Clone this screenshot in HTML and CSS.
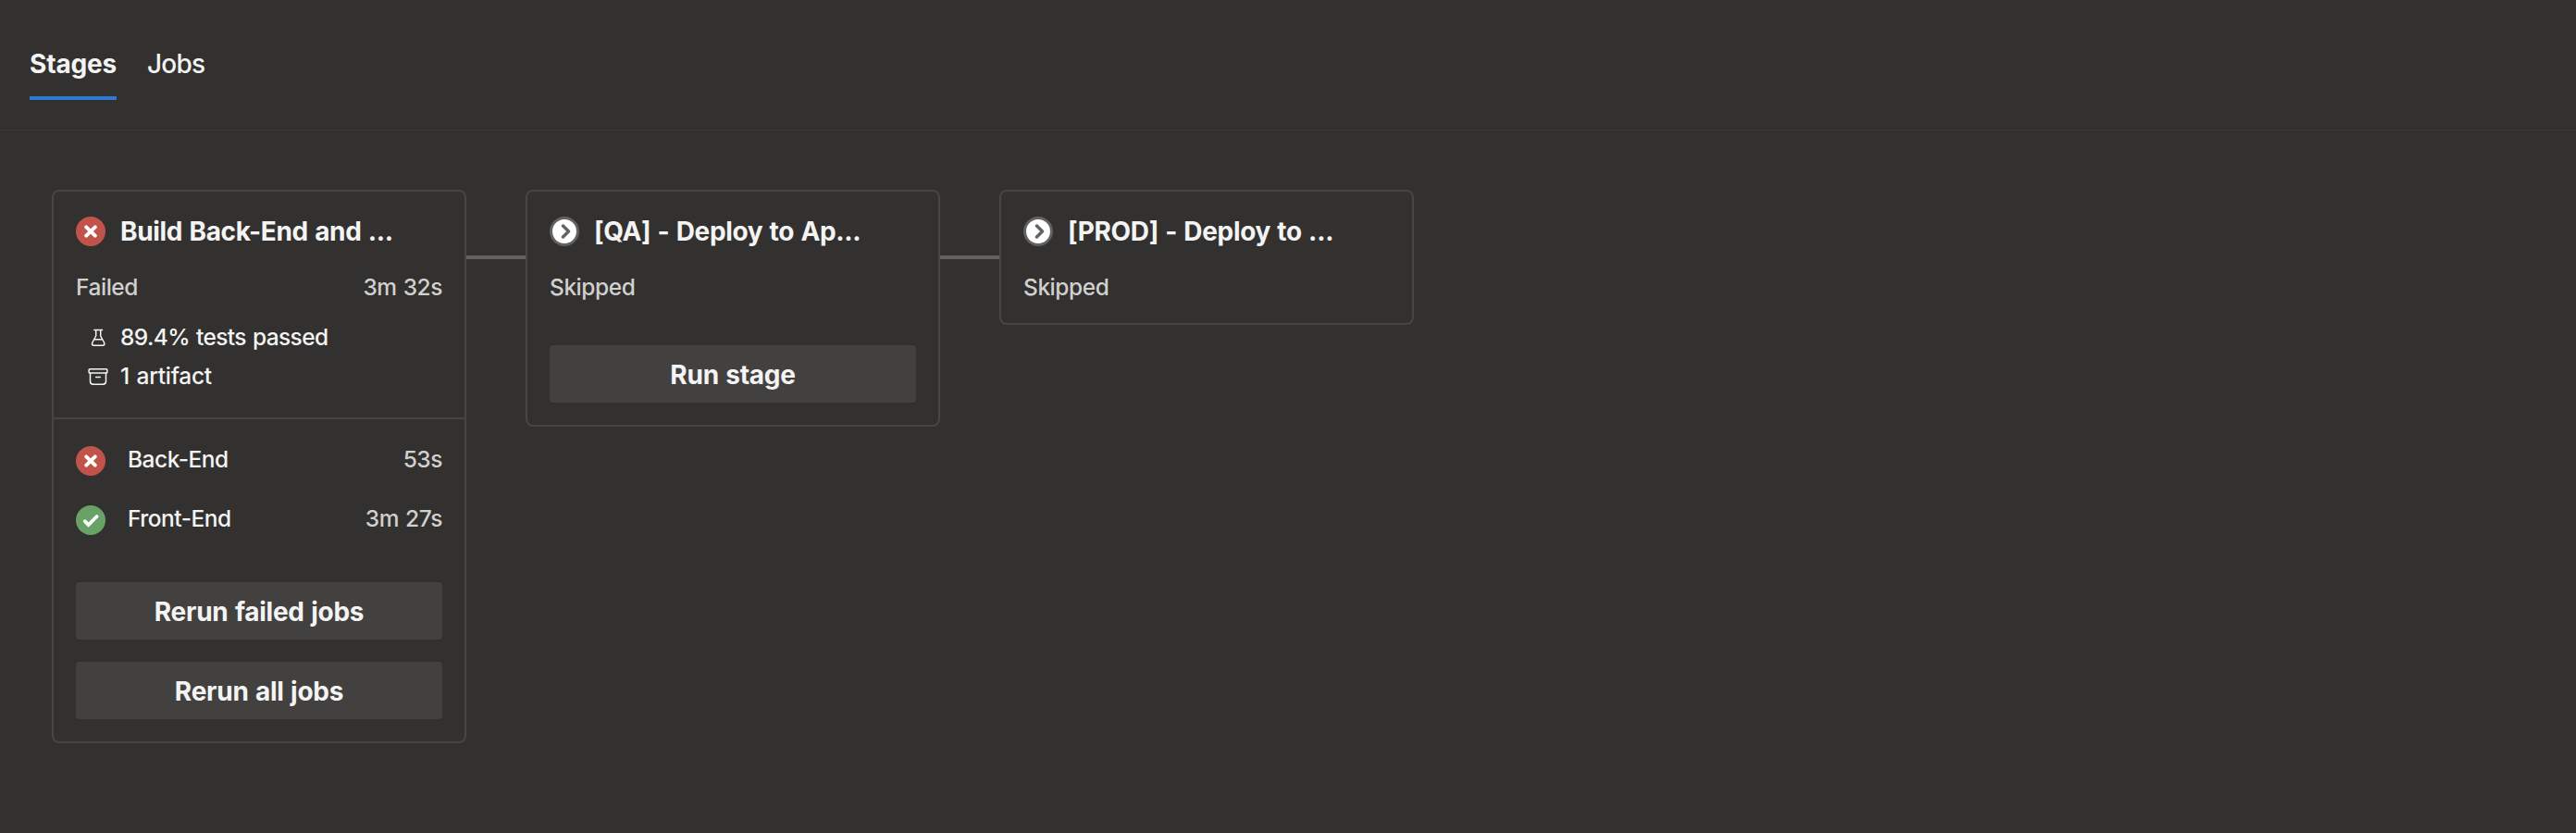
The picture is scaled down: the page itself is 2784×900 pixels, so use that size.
FILE: index.html
```
<!DOCTYPE html>
<html lang="en">
<head>
<meta charset="utf-8">
<title>Pipeline run</title>
<link rel="stylesheet" href="styles.css">
</head>
<body>
<svg class="sprite" aria-hidden="true">
  <symbol id="failed" viewBox="0 0 32 32"><circle cx="16" cy="16" r="16" fill="#c1534b"/><path d="M11.2 11.400l9.600 9.200M20.800 11.400l-9.600 9.200" stroke="#fff" stroke-width="3.900" stroke-linecap="round"/></symbol>
  <symbol id="success" viewBox="0 0 32 32"><circle cx="16" cy="16" r="16" fill="#68a267"/><path d="M9.800 17.200l3.800 3.800L22.600 12" fill="none" stroke="#fff" stroke-width="3.800" stroke-linecap="round"/></symbol>
  <symbol id="skipped" viewBox="0 0 32 32"><circle cx="16" cy="16" r="16" fill="#636261"/><circle cx="16" cy="16" r="13" fill="#fff"/><path d="M14.500 10l6 6-6 6" fill="none" stroke="#636261" stroke-width="3.400" stroke-linecap="round" stroke-linejoin="round"/></symbol>
  <symbol id="flask" viewBox="0 0 22 20"><path d="M6.800 2.400h8.800M8.700 2.400v6.600L4.900 16Q3.600 19.200 6.600 19.200h9.200Q18.800 19.200 17.500 16L13.700 9V2.400M6.800 12.800h8.800" fill="none" stroke="#f4f4f4" stroke-width="1.500" stroke-linecap="round" stroke-linejoin="round"/></symbol>
  <symbol id="archive" viewBox="0 0 22 20"><rect x="1.100" y="2.700" width="19.800" height="4.400" rx="1.200" fill="none" stroke="#f4f4f4" stroke-width="1.500"/><path d="M2.500 7.100v9q0 3.200 3.200 3.200h10.600q3.200 0 3.200-3.200v-9M8.700 11.600h4.600" fill="none" stroke="#f4f4f4" stroke-width="1.500" stroke-linecap="round"/></symbol>
</svg>
<nav class="tabs">
  <a class="tab tab-active">Stages</a>
  <a class="tab">Jobs</a>
</nav>
<main class="stages">
  <section class="stage">
    <div class="stage-summary">
      <h2 class="stage-title"><svg class="status"><use href="#failed"/></svg><span>Build Back-End and ...</span></h2>
      <div class="stage-state"><span>Failed</span><span>3m 32s</span></div>
      <div class="facts">
        <div class="fact fact-tests"><svg class="fact-icon"><use href="#flask"/></svg><span>89.4% tests passed</span></div>
        <div class="fact"><svg class="fact-icon"><use href="#archive"/></svg><span>1 artifact</span></div>
      </div>
    </div>
    <div class="stage-jobs">
      <div class="job"><svg class="status"><use href="#failed"/></svg><span class="job-name">Back-End</span><span class="time">53s</span></div>
      <div class="job"><svg class="status"><use href="#success"/></svg><span class="job-name">Front-End</span><span class="time">3m 27s</span></div>
    </div>
    <div class="actions">
      <button class="btn">Rerun failed jobs</button>
      <button class="btn">Rerun all jobs</button>
    </div>
  </section>
  <div class="connector"></div>
  <section class="stage">
    <div class="stage-summary">
      <h2 class="stage-title"><svg class="status"><use href="#skipped"/></svg><span>[QA] - Deploy to Ap...</span></h2>
      <div class="stage-state"><span>Skipped</span></div>
    </div>
    <div class="actions actions-run"><button class="btn">Run stage</button></div>
  </section>
  <div class="connector"></div>
  <section class="stage">
    <div class="stage-summary stage-only">
      <h2 class="stage-title"><svg class="status"><use href="#skipped"/></svg><span>[PROD] - Deploy to ...</span></h2>
      <div class="stage-state"><span>Skipped</span></div>
    </div>
  </section>
</main>
</body>
</html>
```
FILE: styles.css
```
* { box-sizing: border-box; }
body {
  margin: 0;
  min-height: 900px;
  background: #32312f;
  color: #f4f4f4;
  font-family: Inter, "Liberation Sans", sans-serif;
  font-size: 24.5px;
  font-weight: 450;
  line-height: 32px;
  letter-spacing: -0.45px;
  word-spacing: 1px;
}
.sprite { position: absolute; width: 0; height: 0; }
.tabs {
  display: flex;
  gap: 33px;
  height: 141px;
  padding: 48px 32px 0;
  border-bottom: 1px solid #3b3a38;
}
.tab { height: 60px; font-size: 28px; line-height: 42px; letter-spacing: -0.75px; }
.tab-active { border-bottom: 4px solid #3277d3; font-weight: 700; letter-spacing: -0.17px; }
.stages { display: flex; align-items: flex-start; padding: 64px 56px 0; }
.stage { width: 448px; border: 2px solid #474644; border-radius: 8px; }
.connector { width: 64px; height: 4px; margin-top: 71px; background: #636261; }
.stage-summary { padding: 27px 24px 0; }
.stage-title {
  display: flex;
  align-items: center;
  gap: 16px;
  height: 32px;
  margin: 0;
  font-size: 28px;
  font-weight: 700;
  letter-spacing: -0.33px;
  white-space: nowrap;
}
.status { flex: none; width: 32px; height: 32px; }
.stage-state { display: flex; justify-content: space-between; margin-top: 28px; color: #d1d0cf; }
.stage-only { padding-bottom: 23px; }
.facts { display: flex; flex-direction: column; gap: 10px; padding: 22px 0 29px 13px; }
.fact { display: flex; align-items: center; gap: 13px; letter-spacing: -0.3px; word-spacing: 1.5px; }
.fact-tests { letter-spacing: -0.6px; word-spacing: 1px; }
.fact-icon { width: 22px; height: 20px; }
.stage-jobs { display: flex; flex-direction: column; gap: 32px; padding: 29px 24px 27px; border-top: 2px solid #474644; }
.job { display: flex; align-items: center; height: 32px; }
.job-name { flex: 1; margin-left: 24px; padding-bottom: 4px; letter-spacing: -0.5px; }
.time { padding-bottom: 4px; color: #d1d0cf; }
.actions { display: flex; flex-direction: column; gap: 24px; padding: 24px; }
.actions-run { padding-top: 47px; }
.btn {
  height: 62px;
  padding: 2px 0 0;
  border: 0;
  border-radius: 4px;
  background: #424140;
  color: inherit;
  font: 700 28px/34px Inter, "Liberation Sans", sans-serif;
  letter-spacing: -0.25px;
  word-spacing: 1px;
}
```
